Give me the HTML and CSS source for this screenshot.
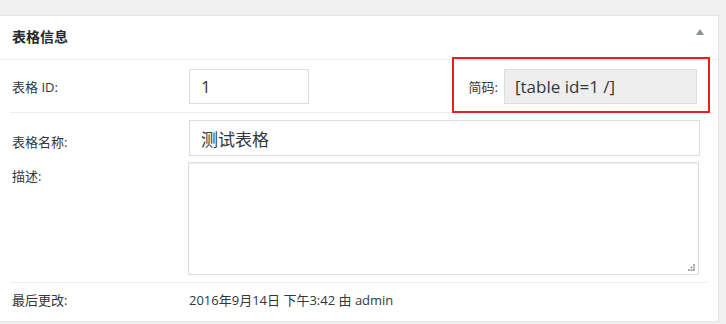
FILE: index.html
```html
<!DOCTYPE html>
<html lang="zh-CN">
<head>
  <meta charset="UTF-8">
  <title>表格信息</title>
  <link rel="stylesheet" href="styles.css">
</head>
<body>
  <div class="postbox">
    <div class="postbox-head">
      <h2>表格信息</h2>
      <svg class="toggle" width="8" height="6" viewBox="0 0 8 6"><polygon points="4,0 8,6 0,6" fill="#8c9196"/></svg>
    </div>
    <div class="inside">
      <div class="row row-id">
        <label class="label">表格 ID:</label>
        <input class="field field-id" type="text" value="1">
        <div class="shortcode">
          <label class="label">简码:</label>
          <input class="field field-code" type="text" value="[table id=1 /]" readonly>
        </div>
      </div>
      <div class="row row-name">
        <label class="label">表格名称:</label>
        <input class="field field-name" type="text" value="测试表格">
      </div>
      <div class="row row-desc">
        <label class="label">描述:</label>
        <div class="desc-wrap">
          <textarea class="field field-desc"></textarea>
          <svg class="grip" width="7" height="7" viewBox="0 0 7 7">
            <rect x="5" y="0" width="2" height="2" fill="#aaa"/>
            <rect x="2.5" y="2.5" width="2" height="2" fill="#aaa"/>
            <rect x="5" y="2.5" width="2" height="2" fill="#aaa"/>
            <rect x="0" y="5" width="2" height="2" fill="#aaa"/>
            <rect x="2.5" y="5" width="2" height="2" fill="#aaa"/>
            <rect x="5" y="5" width="2" height="2" fill="#aaa"/>
          </svg>
        </div>
      </div>
      <div class="row row-last">
        <span class="label">最后更改:</span>
        <span class="value">2016年9月14日 下午3:42 由 admin</span>
      </div>
    </div>
  </div>
</body>
</html>
```

FILE: styles.css
```css
* {
  margin: 0;
  padding: 0;
  box-sizing: border-box;
}
body {
  background: #f1f1f1;
  font-family: 'Open Sans', 'Noto Sans CJK SC', sans-serif;
  color: #32373c;
  font-size: 13px;
}
.postbox {
  margin-top: 15px;
  width: 719px;
  height: 307px;
  background: #fff;
  border: 1px solid #e5e5e5;
  border-left: none;
  box-shadow: 0 1px 1px rgba(0, 0, 0, 0.04);
}
.postbox-head {
  height: 44px;
  border-bottom: 1px solid #eee;
  display: flex;
  align-items: center;
  padding: 0 14px 0 12px;
}
.postbox-head h2 {
  font-size: 14px;
  font-weight: 700;
  color: #23282d;
  flex: 1;
  margin-top: -4px;
}
.toggle {
  margin-top: -12px;
}
.inside {
  padding: 0 10px;
}
.row {
  display: flex;
  align-items: flex-start;
  border-bottom: 1px solid #eee;
}
.row:last-child {
  border-bottom: none;
}
.label {
  width: 179px;
  padding-left: 2px;
  flex-shrink: 0;
  font-size: 13px;
  color: #32373c;
}
.field {
  font-family: 'Open Sans', 'Noto Sans CJK SC', sans-serif;
  font-size: 17px;
  color: #32373c;
  border: 1px solid #ddd;
  background: #fff;
  padding: 0 11px;
  outline: none;
}
.row-id {
  padding: 9px 0 8px;
}
.row-id > .label {
  margin-top: 8px;
}
.field-id {
  width: 120px;
  height: 35px;
}
.shortcode {
  margin: -12px -2px -9px auto;
  border: 2px solid #ee1c1c;
  padding: 10px 11px 7px 15px;
  display: flex;
  align-items: center;
}
.shortcode .label {
  width: auto;
  padding: 0 6px 0 0;
}
.field-code {
  width: 193px;
  height: 35px;
  background: #eee;
  padding: 0 10px;
}
.row-name {
  border-bottom: none;
  padding-top: 7px;
}
.row-name .label {
  margin-top: 12px;
}
.field-name {
  width: 511px;
  height: 36px;
}
.row-desc {
  padding: 6px 0 7px;
}
.row-desc .label {
  margin-top: 4px;
}
.desc-wrap {
  position: relative;
  margin-left: -1px;
}
.field-desc {
  display: block;
  width: 511px;
  height: 113px;
  resize: none;
  box-shadow: inset 0 1px 2px rgba(0, 0, 0, 0.07);
}
.grip {
  position: absolute;
  right: 4px;
  bottom: 4px;
}
.row-last {
  padding-top: 7px;
  align-items: center;
}
.value {
  font-size: 13px;
  color: #32373c;
}
```
